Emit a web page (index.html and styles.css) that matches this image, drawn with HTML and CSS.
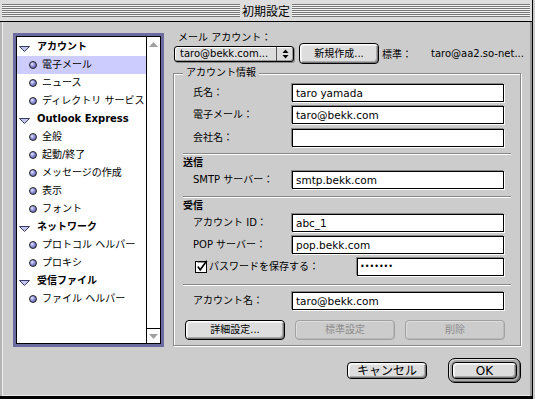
FILE: index.html
```html
<!DOCTYPE html>
<html lang="ja">
<head>
<meta charset="utf-8">
<title>初期設定</title>
<link rel="stylesheet" href="styles.css">
</head>
<body>
<div class="window">
  <div class="titlebar">
    <div class="stripes"></div>
    <div class="title">初期設定</div>
    <div class="stripes"></div>
  </div>
  <div class="content">
    <div class="main">
      <div class="listframe">
        <div class="list">
          <ul class="tree">
            <li class="row head"><svg class="twisty" width="11" height="6" viewBox="0 0 11 6"><path d="M0.5 0.5H10.5L5.5 5.5Z"/></svg>アカウント</li>
            <li class="row leaf sel"><span class="dot"></span>電子メール</li>
            <li class="row leaf"><span class="dot"></span>ニュース</li>
            <li class="row leaf"><span class="dot"></span>ディレクトリ サービス</li>
            <li class="row head"><svg class="twisty" width="11" height="6" viewBox="0 0 11 6"><path d="M0.5 0.5H10.5L5.5 5.5Z"/></svg>Outlook Express</li>
            <li class="row leaf"><span class="dot"></span>全般</li>
            <li class="row leaf"><span class="dot"></span>起動/終了</li>
            <li class="row leaf"><span class="dot"></span>メッセージの作成</li>
            <li class="row leaf"><span class="dot"></span>表示</li>
            <li class="row leaf"><span class="dot"></span>フォント</li>
            <li class="row head"><svg class="twisty" width="11" height="6" viewBox="0 0 11 6"><path d="M0.5 0.5H10.5L5.5 5.5Z"/></svg>ネットワーク</li>
            <li class="row leaf"><span class="dot"></span>プロトコル ヘルパー</li>
            <li class="row leaf"><span class="dot"></span>プロキシ</li>
            <li class="row head"><svg class="twisty" width="11" height="6" viewBox="0 0 11 6"><path d="M0.5 0.5H10.5L5.5 5.5Z"/></svg>受信ファイル</li>
            <li class="row leaf"><span class="dot"></span>ファイル ヘルパー</li>
          </ul>
          <div class="scrollbar">
            <div class="sb-btn"><svg width="9" height="5" viewBox="0 0 9 5"><path class="sb-arrow" d="M4.5 0L9 5H0Z"/></svg></div>
            <div class="sb-track"></div>
            <div class="sb-btn sb-down"><svg width="9" height="5" viewBox="0 0 9 5"><path class="sb-arrow" d="M0 0H9L4.5 5Z"/></svg></div>
          </div>
        </div>
      </div>

      <div class="settings">
        <div class="acct-label">メール アカウント：</div>
        <div class="acct-row">
          <div class="popup">
            <span class="popup-text">taro@bekk.com...</span>
            <span class="popup-arrows"><svg width="7" height="10" viewBox="0 0 7 10"><path d="M3.5 0.5L6.5 4H0.5Z M0.5 6H6.5L3.5 9.5Z"/></svg></span>
          </div>
          <button class="btn btn-new">新規作成...</button>
          <span class="std-label">標準：</span>
          <span class="std-value">taro@aa2.so-net...</span>
        </div>

        <div class="group">
          <div class="group-title">アカウント情報</div>
          <div class="frow mt5"><span class="label">氏名：</span><span class="field">taro yamada</span></div>
          <div class="frow mt4"><span class="label">電子メール：</span><span class="field">taro@bekk.com</span></div>
          <div class="frow mt5"><span class="label">会社名：</span><span class="field"></span></div>
          <div class="sep mt6"></div>
          <div class="sect">送信</div>
          <div class="frow mt2"><span class="label">SMTP サーバー：</span><span class="field">smtp.bekk.com</span></div>
          <div class="sep mt7"></div>
          <div class="sect">受信</div>
          <div class="frow mt2"><span class="label">アカウント ID：</span><span class="field">abc_1</span></div>
          <div class="frow mt4"><span class="label">POP サーバー：</span><span class="field">pop.bekk.com</span></div>
          <div class="frow mt4">
            <svg class="checkbox" width="13" height="13" viewBox="0 0 13 13"><rect x="0.5" y="1.5" width="11" height="11" fill="#fff" stroke="#000"/><path d="M2.5 2.5H10.5" stroke="#999" fill="none"/><path d="M2.8 6.6L5.2 9.8L11.8 0.8" stroke="#000" stroke-width="1.6" fill="none"/></svg>
            <span class="cb-label">パスワードを保存する：</span>
            <span class="field pw-field">•••••••</span>
          </div>
          <div class="sep mt8"></div>
          <div class="frow mt6"><span class="label">アカウント名：</span><span class="field">taro@bekk.com</span></div>
          <div class="grp-buttons">
            <button class="btn">詳細設定...</button>
            <button class="btn disabled">標準設定</button>
            <button class="btn disabled">削除</button>
          </div>
        </div>
      </div>
    </div>

    <div class="footer">
      <button class="btn big cancel">キャンセル</button>
      <div class="ring"><button class="btn big ok">OK</button></div>
    </div>
  </div>
</div>
</body>
</html>
```

FILE: styles.css
```css
* {
  box-sizing: border-box;
  margin: 0;
  padding: 0;
}

html, body {
  background: #cccccc;
}

body {
  width: 535px;
  height: 399px;
  overflow: hidden;
  font-family: "DejaVu Sans", "Noto Sans CJK JP", sans-serif;
  font-size: 10px;
  color: #000;
}

.window {
  width: 533px;
  height: 399px;
  background: #cccccc;
  border-right: 1px solid #000;
  border-bottom: 3px solid #000;
  display: flex;
  flex-direction: column;
}

/* title bar */
.titlebar {
  height: 22px;
  flex: none;
  background: #dddddd;
  border-bottom: 1px solid #000;
  display: flex;
  align-items: flex-start;
  padding: 4px 2px 0;
}

.stripes {
  flex: 1;
  height: 13px;
  background: repeating-linear-gradient(to bottom, #777 0 1px, #f4f4f4 1px 2px);
}

.title {
  font-family: "Noto Sans CJK JP", sans-serif;
  font-size: 12px;
  line-height: 13px;
  margin: 0 2px;
}

/* content */
.content {
  flex: 1;
  padding: 11px 11px 0 13px;
  box-shadow: inset 2px 0 0 #b4b4b4, inset 3px 0 0 #eeeeee, inset -2px 0 0 #999, inset 0 -1px 0 #e6e6e6;
}

.main {
  display: flex;
  align-items: flex-start;
  gap: 9px;
}

/* list */
.listframe {
  width: 151px;
  height: 314px;
  flex: none;
  border: 3px solid #6b6b9f;
}

.list {
  height: 100%;
  border: 1px solid #000;
  background: #fff;
  display: flex;
}

.tree {
  flex: 1;
  list-style: none;
  padding-top: 1px;
}

.row {
  height: 18px;
  display: flex;
  align-items: center;
  white-space: nowrap;
  line-height: 12px;
}

.head {
  font-weight: bold;
  padding-left: 2px;
}

.twisty {
  flex: none;
  margin: 4px 7px 0 0;
}

.twisty path {
  fill: #c4c4f0;
  stroke: #3a3a66;
  stroke-width: 1;
  stroke-linejoin: round;
}

.leaf {
  padding-left: 12px;
}

.sel {
  background: #ccccff;
}

.dot {
  flex: none;
  width: 8px;
  height: 8px;
  border-radius: 50%;
  border: 1px solid #222;
  background: radial-gradient(circle at 35% 35%, #f0f0ff 0, #9a9ae0 35%, #4b4b9a 100%);
  margin-right: 5px;
}

.scrollbar {
  width: 14px;
  flex: none;
  border-left: 1px solid #000;
  display: flex;
  flex-direction: column;
}

.sb-btn {
  height: 14px;
  display: flex;
  align-items: center;
  justify-content: center;
}

.sb-down {
  height: 15px;
  border-top: 1px solid #000;
}

.sb-track {
  flex: 1;
}

.sb-arrow {
  fill: #a0a0a0;
}

/* settings column */
.settings {
  width: 348px;
  flex: none;
}

.acct-label {
  line-height: 10px;
  padding-left: 5px;
}

.acct-row {
  height: 21px;
  display: flex;
  align-items: center;
  white-space: nowrap;
}

.acct-row > * {
  flex: none;
}

.popup {
  width: 120px;
  height: 16px;
  margin-left: 1px;
  border: 1px solid #000;
  border-radius: 3px;
  background: #dddddd;
  box-shadow: inset 1px 1px 0 #fff, inset -1px -1px 0 #999, 1px 1px 0 #888;
  display: flex;
  align-items: stretch;
}

.popup-text {
  flex: 1;
  padding-left: 5px;
  line-height: 14px;
  white-space: nowrap;
}

.popup-arrows {
  width: 17px;
  border-left: 1px solid #555;
  display: flex;
  align-items: center;
  justify-content: center;
}

.popup-arrows path {
  fill: #000;
}

.std-label {
  margin-left: 3px;
}

.std-value {
  margin-left: 19px;
}

/* buttons */
.btn {
  appearance: none;
  font: inherit;
  color: #000;
  height: 20px;
  border: 1px solid #000;
  border-radius: 4px;
  background: #dddddd;
  box-shadow: inset 1px 1px 0 #fff, inset 2px 2px 0 #eee, inset -1px -1px 0 #777, inset -2px -2px 0 #aaa;
  display: flex;
  align-items: center;
  justify-content: center;
  line-height: 12px;
}

.btn-new {
  width: 80px;
  height: 21px;
  margin-left: 5px;
}

.btn.disabled {
  color: #8c8c8c;
  border-color: #a0a0a0;
  background: #cccccc;
  box-shadow: inset 1px 1px 0 #dedede, inset -1px -1px 0 #bbb;
}

.btn.big {
  font-size: 12px;
  height: 17px;
}

.cancel {
  width: 80px;
}

.ok {
  width: 65px;
}

.ring {
  border: 1px solid #000;
  border-radius: 7px;
  padding: 3px;
  background: #a8a8a8;
  box-shadow: inset 1px 1px 0 #e0e0e0, inset -1px -1px 0 #666;
}

/* group box */
.group {
  margin-top: 9px;
  border: 1px solid #888;
  box-shadow: inset 1px 1px 0 #fff, 1px 1px 0 #fff;
  padding-bottom: 5px;
}

.group-title {
  margin: -7px 0 0 9px;
  padding: 0 3px;
  width: max-content;
  background: #cccccc;
  line-height: 12px;
}

.frow {
  display: flex;
  align-items: center;
  height: 18px;
  width: 311px;
  margin-left: 19px;
  white-space: nowrap;
}

.label {
  width: 99px;
  flex: none;
  line-height: 12px;
}

.field {
  width: 212px;
  height: 18px;
  flex: none;
  border: 1px solid #000;
  background: #fff;
  box-shadow: -1px -1px 0 #888, 1px 1px 0 #fff;
  padding-left: 3px;
  font-size: 10.5px;
  line-height: 16px;
  white-space: nowrap;
  overflow: hidden;
}

.checkbox {
  flex: none;
  margin: -1px 1px 0 2px;
}

.cb-label {
  line-height: 12px;
}

.pw-field {
  width: 147px;
  margin-left: auto;
  font-size: 8px;
  padding-left: 2px;
}

.sep {
  margin-left: 9px;
  margin-right: 9px;
  border-top: 1px solid #888;
  border-bottom: 1px solid #fff;
}

.sect {
  font-weight: bold;
  margin: 2px 0 0 9px;
  line-height: 12px;
}

.mt2 { margin-top: 2px; }
.mt4 { margin-top: 4px; }
.mt5 { margin-top: 5px; }
.mt6 { margin-top: 6px; }
.mt7 { margin-top: 7px; }
.mt8 { margin-top: 8px; }

.grp-buttons {
  display: grid;
  grid-template-columns: repeat(3, 100px);
  gap: 10px;
  margin: 10px 0 0 11px;
}

/* footer */
.footer {
  display: flex;
  justify-content: flex-end;
  align-items: center;
  gap: 21px;
  margin-top: 11px;
}
```
